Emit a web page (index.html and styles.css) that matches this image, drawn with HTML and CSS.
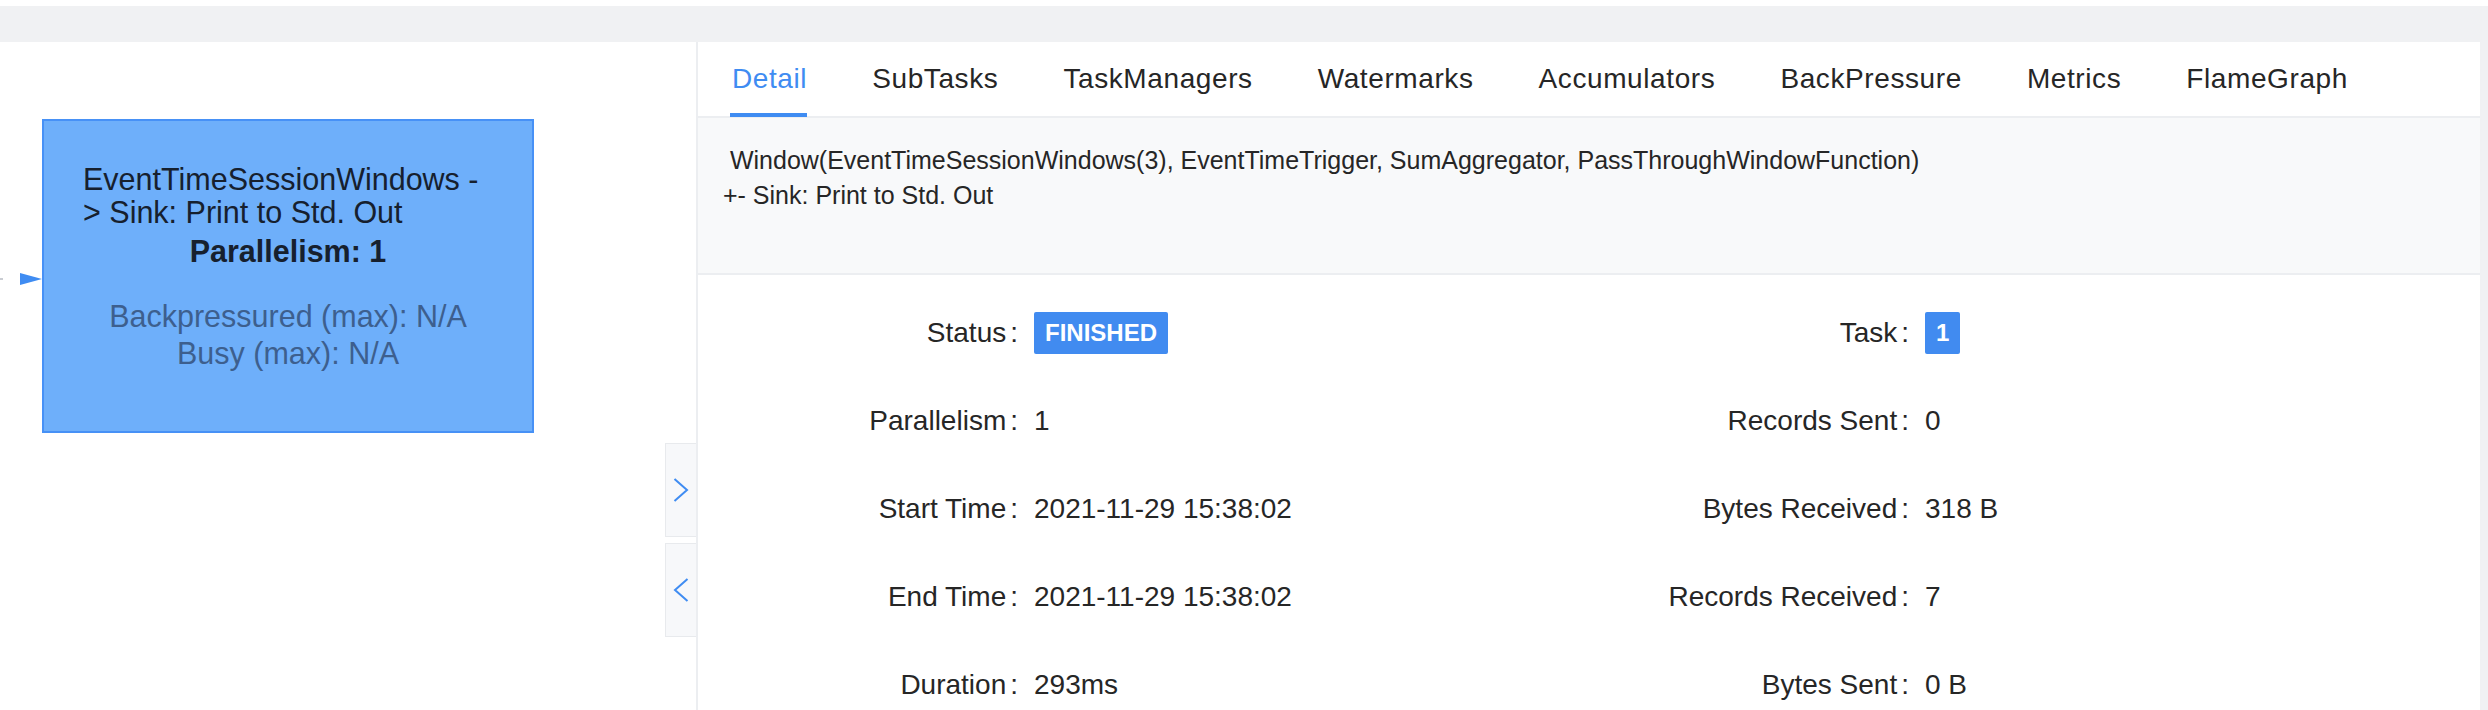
FILE: index.html
```html
<!DOCTYPE html>
<html>
<head>
<meta charset="utf-8">
<link rel="stylesheet" href="styles.css">
</head>
<body>
<div class="top-band"></div>
<div class="main">
  <div class="graph">
    <svg class="edge" width="44" height="16" viewBox="0 0 44 16">
      <line x1="0" y1="8" x2="3" y2="8" stroke="#c9ccd2" stroke-width="2"/>
      <polygon points="20,2 42,8 20,14" fill="#3f8cf2"/>
    </svg>
    <div class="node">
      <div class="node-title">EventTimeSessionWindows -<br>&gt; Sink: Print to Std. Out</div>
      <div class="node-par">Parallelism: 1</div>
      <div class="node-metrics">
        <div>Backpressured (max): N/A</div>
        <div>Busy (max): N/A</div>
      </div>
    </div>
    <div class="toggles">
      <div class="toggle">
        <svg width="16" height="24" viewBox="0 0 16 24"><polyline points="1.5,1 14,12 1.5,23" fill="none" stroke="#3f8cf2" stroke-width="2"/></svg>
      </div>
      <div class="toggle">
        <svg width="16" height="24" viewBox="0 0 16 24"><polyline points="14.5,1 2,12 14.5,23" fill="none" stroke="#3f8cf2" stroke-width="2"/></svg>
      </div>
    </div>
  </div>
  <div class="panel">
    <div class="tabs">
      <div class="tab active">Detail</div>
      <div class="tab">SubTasks</div>
      <div class="tab">TaskManagers</div>
      <div class="tab">Watermarks</div>
      <div class="tab">Accumulators</div>
      <div class="tab">BackPressure</div>
      <div class="tab">Metrics</div>
      <div class="tab">FlameGraph</div>
    </div>
    <div class="desc"> Window(EventTimeSessionWindows(3), EventTimeTrigger, SumAggregator, PassThroughWindowFunction)
+- Sink: Print to Std. Out</div>
    <div class="details">
      <div class="item"><span class="label">Status</span><span class="value"><span class="tag">FINISHED</span></span></div>
      <div class="item"><span class="label">Task</span><span class="value"><span class="tag">1</span></span></div>
      <div class="item"><span class="label">Parallelism</span><span class="value">1</span></div>
      <div class="item"><span class="label">Records Sent</span><span class="value">0</span></div>
      <div class="item"><span class="label">Start Time</span><span class="value">2021-11-29 15:38:02</span></div>
      <div class="item"><span class="label">Bytes Received</span><span class="value">318 B</span></div>
      <div class="item"><span class="label">End Time</span><span class="value">2021-11-29 15:38:02</span></div>
      <div class="item"><span class="label">Records Received</span><span class="value">7</span></div>
      <div class="item"><span class="label">Duration</span><span class="value">293ms</span></div>
      <div class="item"><span class="label">Bytes Sent</span><span class="value">0 B</span></div>
    </div>
  </div>
  <div class="gutter"></div>
</div>
</body>
</html>
```
FILE: styles.css
```css
html, body {
  margin: 0;
  padding: 0;
  height: 710px;
  overflow: hidden;
  background: #ffffff;
  font-family: "Liberation Sans", Arial, sans-serif;
  color: #262626;
}

.top-band {
  margin-top: 6px;
  height: 36px;
  background: #f0f1f3;
}

.main {
  display: flex;
  height: 668px;
  overflow: hidden;
}

.graph {
  position: relative;
  width: 696px;
  flex: none;
  background: #fff;
  overflow: hidden;
}

.edge {
  position: absolute;
  left: 0;
  top: 229px;
}

.node {
  position: absolute;
  left: 42px;
  top: 77px;
  width: 488px;
  height: 310px;
  border: 2px solid #4791f6;
  background: #6eaffa;
  box-sizing: content-box;
  font-size: 30.5px;
  color: rgba(0, 0, 0, 0.85);
}

.node-title {
  padding: 42px 30px 0 39px;
  line-height: 33px;
  text-align: left;
  color: #16202e;
}

.node-par {
  margin-top: 6px;
  line-height: 33px;
  font-weight: bold;
  text-align: center;
  color: #16202e;
}

.node-metrics {
  margin-top: 30px;
  line-height: 37px;
  text-align: center;
  color: #3d5f8e;
}

.toggles {
  position: absolute;
  right: 0;
  top: 401px;
  display: flex;
  flex-direction: column;
  gap: 6px;
}

.toggle {
  width: 30px;
  height: 92px;
  border: 1px solid #e8eaed;
  border-right: none;
  background: #f7f8fa;
  display: flex;
  align-items: center;
  justify-content: center;
}

.panel {
  flex: none;
  width: 1782px;
  border-left: 2px solid #eceef1;
  background: #fff;
  display: block;
}

.tabs {
  display: flex;
  gap: 65px;
  height: 74px;
  padding-left: 34px;
  border-bottom: 2px solid #eceef1;
  font-size: 28px;
  letter-spacing: 0.6px;
}

.tab {
  display: flex;
  align-items: center;
  color: #262626;
  position: relative;
}

.tab.active {
  color: #3f8cf2;
}

.tab.active::after {
  content: "";
  position: absolute;
  left: -2px;
  right: 0;
  bottom: -1px;
  height: 4px;
  background: #3f8cf2;
}

.desc {
  background: #f8f9fa;
  border-bottom: 2px solid #eceef1;
  height: 157px;
  box-sizing: border-box;
  padding: 25px 24px 0 25px;
  font-size: 25px;
  line-height: 35px;
  white-space: pre;
  color: #262626;
}

.details {
  display: grid;
  grid-template-columns: 891px 891px;
  grid-auto-rows: 88px;
  padding-top: 14px;
}

.item {
  display: flex;
  align-items: center;
  font-size: 28px;
}

.label {
  width: 336px;
  flex: none;
  text-align: right;
  color: #262626;
}

.label::after {
  content: ":";
  margin: 0 16px 0 4px;
}

.value {
  color: #262626;
}

.tag {
  display: inline-block;
  height: 42px;
  line-height: 42px;
  padding: 0 11px;
  background: #418bf0;
  color: #fff;
  font-size: 24px;
  font-weight: bold;
  border-radius: 2px;
  vertical-align: middle;
}

.gutter {
  flex: 1;
  background: #f0f1f3;
}
```
